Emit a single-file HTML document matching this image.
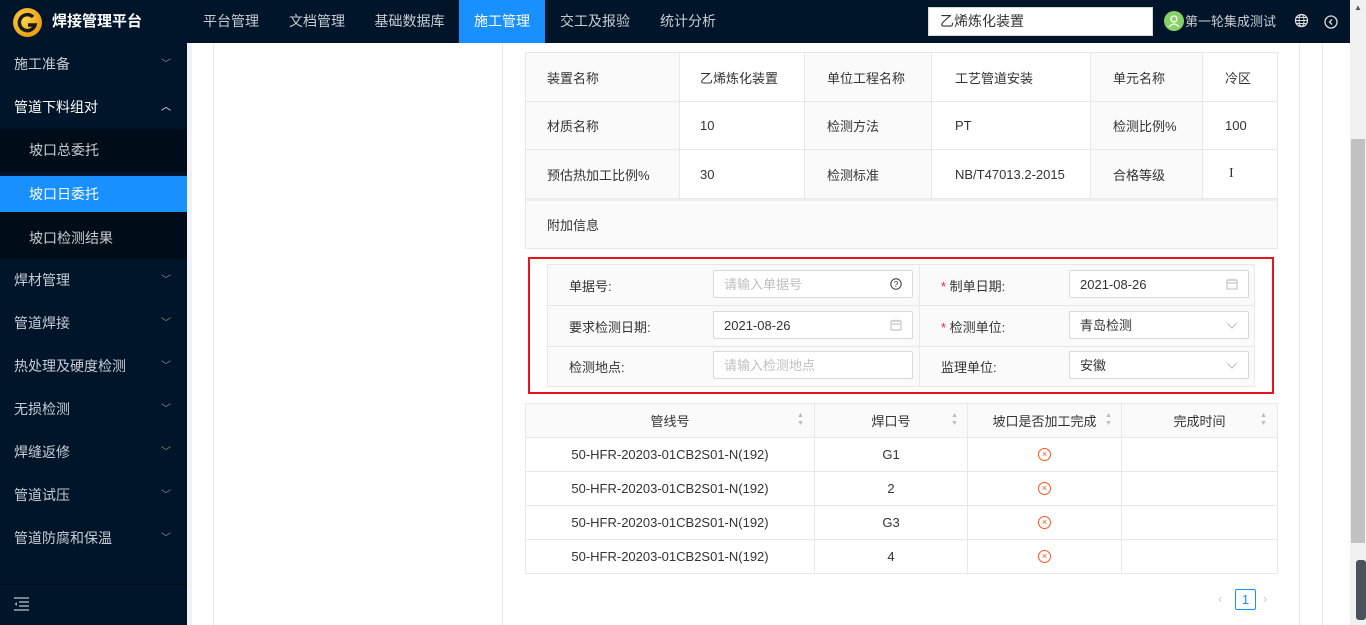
<!DOCTYPE html>
<html><head><meta charset="utf-8"><style>
*{margin:0;padding:0;box-sizing:border-box}
body{width:1366px;height:625px;overflow:hidden;position:relative;background:#fff;font-family:"Liberation Sans","Noto Sans CJK SC",sans-serif;font-size:13px;color:#333}
.abs{position:absolute}
.hdr{left:0;top:0;width:1350px;height:43px;background:#001529}
.nav{top:0;height:43px;line-height:43px;color:#c8ccd2;font-size:14px;text-align:center}
.side{left:0;top:43px;width:187px;height:582px;background:#001529}
.mi{left:0;width:187px;height:43px;line-height:43px;padding-left:14px;color:#c8ccd2;font-size:14px}
.mi .ar{position:absolute;right:16px;top:0;font-size:10px;color:#8a919a}
.sub{background:#000c17}
.cell{position:absolute;display:flex;align-items:center;border-right:1px solid #e8e8e8;border-bottom:1px solid #e8e8e8}
.g{background:#fafafa}
.inp{position:absolute;height:28px;border:1px solid #d9d9d9;background:#fff;border-radius:2px;line-height:28px;padding-left:10px;font-size:13px}
.ph{color:#bfbfbf}
.ic{position:absolute;right:10px;top:7px}
.x{display:inline-block;width:13px;height:13px;border:1px solid #f5541f;border-radius:50%;color:#f5541f;font-size:9px;line-height:11px;text-align:center}
.so{position:absolute;color:#bbb;font-size:7px;line-height:8px;top:412px}
</style></head><body>
<div class="abs hdr"></div>
<div class="abs" style="left:13px;top:8px;width:29px;height:29px;border-radius:50%;background:radial-gradient(circle at 40% 40%,#ffd54a,#e08a00)"></div>
<svg class="abs" style="left:13px;top:8px" width="29" height="29" viewBox="0 0 29 29"><path d="M20 9 A8 8 0 1 0 22 17 H15" fill="none" stroke="#1a1a1a" stroke-width="3.5"/></svg>
<div class="abs" style="left:52px;top:0;line-height:43px;color:#fff;font-size:15px;font-weight:bold">焊接管理平台</div>
<div class="abs nav" style="left:188px;width:86px">平台管理</div>
<div class="abs nav" style="left:274px;width:86px">文档管理</div>
<div class="abs nav" style="left:360px;width:99px">基础数据库</div>
<div class="abs nav" style="left:459px;width:86px;background:#1890ff;color:#fff">施工管理</div>
<div class="abs nav" style="left:545px;width:100px">交工及报验</div>
<div class="abs nav" style="left:645px;width:86px">统计分析</div>
<div class="abs" style="left:928px;top:7px;width:225px;height:29px;background:#fff;border:1px solid #d9d9d9;line-height:27px;padding-left:11px;font-size:14px;color:#333">乙烯炼化装置</div>
<div class="abs" style="left:1164px;top:11px;width:20px;height:20px;border-radius:50%;background:#87d068"></div>
<svg class="abs" style="left:1164px;top:11px" width="20" height="20"><circle cx="10" cy="8" r="3" fill="none" stroke="#fff" stroke-width="1.3"/><path d="M5 16 Q10 10 15 16" fill="none" stroke="#fff" stroke-width="1.3"/></svg>
<div class="abs" style="left:1185px;top:0;line-height:43px;color:#c8ccd2;font-size:13px">第一轮集成测试</div>
<svg class="abs" style="left:1294px;top:13px" width="15" height="15"><circle cx="7.5" cy="7.5" r="6" fill="none" stroke="#ddd" stroke-width="1.3"/><ellipse cx="7.5" cy="7.5" rx="2.5" ry="6" fill="none" stroke="#ddd"/><path d="M1.5 7.5H13.5M2.5 4.5H12.5M2.5 10.5H12.5" stroke="#ddd"/></svg>
<svg class="abs" style="left:1324px;top:15px" width="14" height="14"><circle cx="7" cy="7" r="6" fill="none" stroke="#ddd" stroke-width="1.3"/><path d="M8 4.5 L5.5 7 L8 9.5" fill="none" stroke="#ddd" stroke-width="1.3"/></svg>
<div class="abs" style="left:1350px;top:0;width:16px;height:625px;background:#f1f1f1"></div>
<div class="abs" style="left:1351px;top:139px;width:14px;height:404px;background:#c1c1c1"></div>
<div class="abs" style="left:1354px;top:3px;color:#555;font-size:8px">▲</div>
<div class="abs" style="left:1356px;top:560px;width:10px;height:60px;background:#4a525c;border-radius:3px"></div>

<div class="abs side"></div>
<div class="abs mi" style="top:43px">施工准备<span class="ar">﹀</span></div>
<div class="abs mi" style="top:86px;color:#fff">管道下料组对<span class="ar" style="color:#fff">︿</span></div>
<div class="abs mi sub" style="top:129px;padding-left:29px">坡口总委托</div>
<div class="abs mi" style="top:176px;height:36px;line-height:36px;padding-left:29px;background:#1890ff;color:#fff">坡口日委托</div>
<div class="abs mi sub" style="top:212px;height:47px;line-height:52px;padding-left:29px">坡口检测结果</div>
<div class="abs mi" style="top:259px">焊材管理<span class="ar">﹀</span></div>
<div class="abs mi" style="top:302px">管道焊接<span class="ar">﹀</span></div>
<div class="abs mi" style="top:345px">热处理及硬度检测<span class="ar">﹀</span></div>
<div class="abs mi" style="top:388px">无损检测<span class="ar">﹀</span></div>
<div class="abs mi" style="top:431px">焊缝返修<span class="ar">﹀</span></div>
<div class="abs mi" style="top:474px">管道试压<span class="ar">﹀</span></div>
<div class="abs mi" style="top:517px">管道防腐和保温<span class="ar">﹀</span></div>
<div class="abs" style="left:0;top:584px;width:187px;height:1px;background:#000c17"></div>
<svg class="abs" style="left:14px;top:597px" width="16" height="14"><path d="M0 1H15M5 5H15M5 9H15M0 13H15" stroke="#a0a6ad" stroke-width="1.5"/><path d="M3 5L0.5 7L3 9Z" fill="#a0a6ad"/></svg>

<div class="abs" style="left:187px;top:43px;width:5px;height:582px;background:#f0f2f5"></div>
<div class="abs" style="left:213px;top:43px;width:1px;height:582px;background:#e8e8e8"></div>
<div class="abs" style="left:502px;top:43px;width:1px;height:582px;background:#e8e8e8"></div>
<div class="abs" style="left:1299px;top:43px;width:1px;height:582px;background:#e8e8e8"></div>
<div class="abs" style="left:1322px;top:43px;width:1px;height:582px;background:#e8e8e8"></div>

<div class="abs" style="left:525px;top:52px;width:753px;height:197px;border-left:1px solid #e8e8e8;border-top:1px solid #e8e8e8"></div>
<div class="cell g" style="left:526px;top:53px;width:154px;height:49px;padding-left:21px">装置名称</div>
<div class="cell" style="left:680px;top:53px;width:125px;height:49px;padding-left:20px">乙烯炼化装置</div>
<div class="cell g" style="left:805px;top:53px;width:127px;height:49px;padding-left:22px">单位工程名称</div>
<div class="cell" style="left:932px;top:53px;width:159px;height:49px;padding-left:23px">工艺管道安装</div>
<div class="cell g" style="left:1091px;top:53px;width:112px;height:49px;padding-left:22px">单元名称</div>
<div class="cell" style="left:1203px;top:53px;width:75px;height:49px;padding-left:22px">冷区</div>
<div class="cell g" style="left:526px;top:102px;width:154px;height:48px;padding-left:21px">材质名称</div>
<div class="cell" style="left:680px;top:102px;width:125px;height:48px;padding-left:20px">10</div>
<div class="cell g" style="left:805px;top:102px;width:127px;height:48px;padding-left:22px">检测方法</div>
<div class="cell" style="left:932px;top:102px;width:159px;height:48px;padding-left:23px">PT</div>
<div class="cell g" style="left:1091px;top:102px;width:112px;height:48px;padding-left:22px">检测比例%</div>
<div class="cell" style="left:1203px;top:102px;width:75px;height:48px;padding-left:22px">100</div>
<div class="cell g" style="left:526px;top:150px;width:154px;height:49px;padding-left:21px">预估热加工比例%</div>
<div class="cell" style="left:680px;top:150px;width:125px;height:49px;padding-left:20px">30</div>
<div class="cell g" style="left:805px;top:150px;width:127px;height:49px;padding-left:22px">检测标准</div>
<div class="cell" style="left:932px;top:150px;width:159px;height:49px;padding-left:23px">NB/T47013.2-2015</div>
<div class="cell g" style="left:1091px;top:150px;width:112px;height:49px;padding-left:22px">合格等级</div>
<div class="cell" style="left:1203px;top:150px;width:75px;height:49px;padding-left:26px;font-family:'Liberation Serif',serif;font-size:14px">I</div>
<div class="cell g" style="left:526px;top:199px;width:752px;height:50px;padding-left:21px;border-top:2px solid #eee">附加信息</div>

<div class="abs" style="left:528px;top:257px;width:746px;height:137px;border:2px solid #e8141b"></div>
<div class="abs" style="left:547px;top:264px;width:708px;height:123px;background:#fafafa;border:1px solid #e8e8e8"></div>
<div class="abs" style="left:919px;top:264px;width:1px;height:123px;background:#e8e8e8"></div>
<div class="abs" style="left:547px;top:305px;width:708px;height:1px;background:#e8e8e8"></div>
<div class="abs" style="left:547px;top:346px;width:708px;height:1px;background:#e8e8e8"></div>
<div class="abs" style="left:569px;top:276px">单据号:</div>
<div class="abs" style="left:569px;top:317px">要求检测日期:</div>
<div class="abs" style="left:569px;top:357px">检测地点:</div>
<div class="abs" style="left:941px;top:276px"><span style="color:#f5222d">* </span>制单日期:</div>
<div class="abs" style="left:941px;top:317px"><span style="color:#f5222d">* </span>检测单位:</div>
<div class="abs" style="left:941px;top:357px">监理单位:</div>
<div class="inp ph" style="left:713px;top:270px;width:200px">请输入单据号<svg class="ic" width="12" height="12"><circle cx="6" cy="6" r="5.2" fill="none" stroke="#333"/><text x="6" y="9" font-size="8" text-anchor="middle" fill="#333" font-family="Liberation Sans">?</text></svg></div>
<div class="inp" style="left:713px;top:311px;width:200px">2021-08-26<svg class="ic" width="12" height="12"><rect x="1" y="2" width="10" height="9" fill="none" stroke="#bbb"/><path d="M1 5H11M4 0.5V3M8 0.5V3" stroke="#bbb"/></svg></div>
<div class="inp ph" style="left:713px;top:351px;width:200px">请输入检测地点</div>
<div class="inp" style="left:1069px;top:270px;width:180px">2021-08-26<svg class="ic" width="12" height="12"><rect x="1" y="2" width="10" height="9" fill="none" stroke="#bbb"/><path d="M1 5H11M4 0.5V3M8 0.5V3" stroke="#bbb"/></svg></div>
<div class="inp" style="left:1069px;top:311px;width:180px">青岛检测<svg class="ic" width="12" height="12"><path d="M1 4L6 9L11 4" fill="none" stroke="#bbb"/></svg></div>
<div class="inp" style="left:1069px;top:351px;width:180px">安徽<svg class="ic" width="12" height="12"><path d="M1 4L6 9L11 4" fill="none" stroke="#bbb"/></svg></div>

<div class="abs" style="left:525px;top:403px;width:753px;height:171px;border-left:1px solid #e8e8e8;border-top:1px solid #e8e8e8"></div>
<div class="cell g" style="left:526px;top:404px;width:289px;height:34px;justify-content:center">管线号</div>
<div class="cell g" style="left:815px;top:404px;width:153px;height:34px;justify-content:center">焊口号</div>
<div class="cell g" style="left:968px;top:404px;width:154px;height:34px;justify-content:center">坡口是否加工完成</div>
<div class="cell g" style="left:1122px;top:404px;width:156px;height:34px;justify-content:center">完成时间</div>
<div class="so" style="left:797px">▲<br>▼</div>
<div class="so" style="left:951px">▲<br>▼</div>
<div class="so" style="left:1105px">▲<br>▼</div>
<div class="so" style="left:1260px">▲<br>▼</div>

<div class="cell" style="left:526px;top:438px;width:289px;height:34px;justify-content:center">50-HFR-20203-01CB2S01-N(192)</div>
<div class="cell" style="left:815px;top:438px;width:153px;height:34px;justify-content:center">G1</div>
<div class="cell" style="left:968px;top:438px;width:154px;height:34px;justify-content:center"><span class="x">×</span></div>
<div class="cell" style="left:1122px;top:438px;width:156px;height:34px"></div>
<div class="cell" style="left:526px;top:472px;width:289px;height:34px;justify-content:center">50-HFR-20203-01CB2S01-N(192)</div>
<div class="cell" style="left:815px;top:472px;width:153px;height:34px;justify-content:center">2</div>
<div class="cell" style="left:968px;top:472px;width:154px;height:34px;justify-content:center"><span class="x">×</span></div>
<div class="cell" style="left:1122px;top:472px;width:156px;height:34px"></div>
<div class="cell" style="left:526px;top:506px;width:289px;height:34px;justify-content:center">50-HFR-20203-01CB2S01-N(192)</div>
<div class="cell" style="left:815px;top:506px;width:153px;height:34px;justify-content:center">G3</div>
<div class="cell" style="left:968px;top:506px;width:154px;height:34px;justify-content:center"><span class="x">×</span></div>
<div class="cell" style="left:1122px;top:506px;width:156px;height:34px"></div>
<div class="cell" style="left:526px;top:540px;width:289px;height:34px;justify-content:center">50-HFR-20203-01CB2S01-N(192)</div>
<div class="cell" style="left:815px;top:540px;width:153px;height:34px;justify-content:center">4</div>
<div class="cell" style="left:968px;top:540px;width:154px;height:34px;justify-content:center"><span class="x">×</span></div>
<div class="cell" style="left:1122px;top:540px;width:156px;height:34px"></div>

<div class="abs" style="left:1218px;top:591px;color:#ccc;font-size:13px">‹</div>
<div class="abs" style="left:1235px;top:589px;width:21px;height:21px;border:1px solid #1890ff;border-radius:2px;color:#1890ff;text-align:center;line-height:19px;font-size:13px">1</div>
<div class="abs" style="left:1263px;top:591px;color:#ccc;font-size:13px">›</div>
</body></html>
